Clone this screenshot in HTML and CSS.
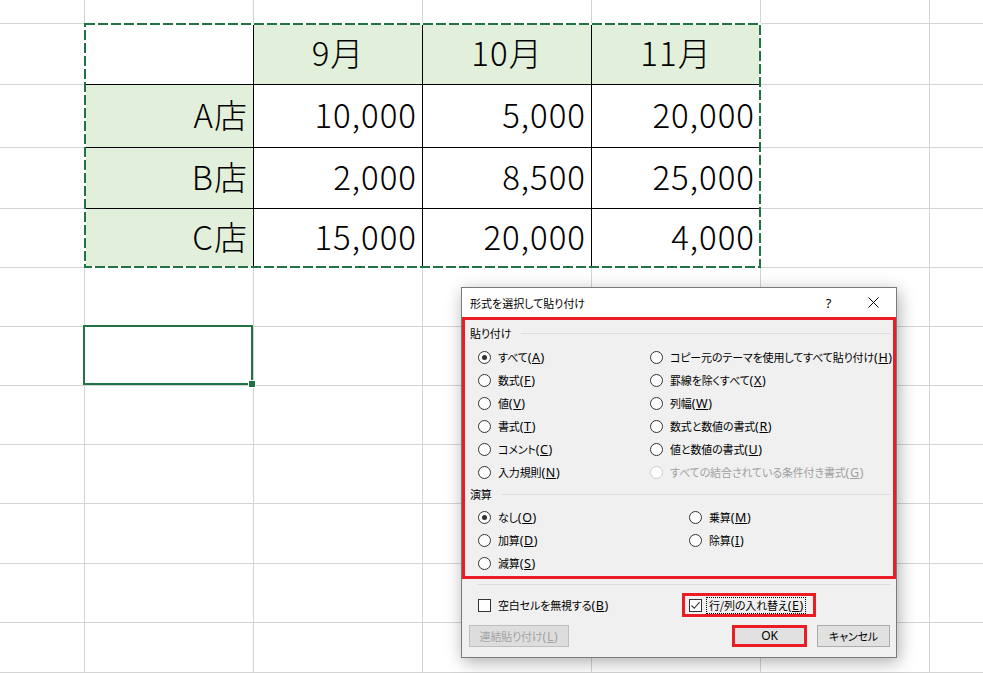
FILE: index.html
```html
<!DOCTYPE html>
<html lang="ja">
<head>
<meta charset="utf-8">
<title>形式を選択して貼り付け</title>
<link rel="stylesheet" href="styles.css">
</head>
<body>
<div class="sheet">
  <div></div><div></div><div></div><div></div><div></div><div></div><div></div>

  <div></div><div class="t"></div><div class="t h">9月</div><div class="t h">10月</div><div class="t h">11月</div><div></div><div></div>
  <div></div><div class="t lab">A店</div><div class="t num">10,000</div><div class="t num">5,000</div><div class="t num">20,000</div><div></div><div></div>
  <div></div><div class="t lab">B店</div><div class="t num">2,000</div><div class="t num">8,500</div><div class="t num">25,000</div><div></div><div></div>
  <div></div><div class="t lab">C店</div><div class="t num">15,000</div><div class="t num">20,000</div><div class="t num">4,000</div><div></div><div></div>

  <div></div><div></div><div></div><div></div><div></div><div></div><div></div>
  <div></div><div class="sel"></div><div></div><div></div><div></div><div></div><div></div>
  <div></div><div></div><div></div><div></div><div></div><div></div><div></div>
  <div></div><div></div><div></div><div></div><div></div><div></div><div></div>
  <div></div><div></div><div></div><div></div><div></div><div></div><div></div>
  <div></div><div></div><div></div><div></div><div></div><div></div><div></div>
  <div></div><div></div><div></div><div></div><div></div><div></div><div></div>
</div>

<!-- copy marquee around the copied range -->
<svg class="ants" width="678" height="246" viewBox="0 0 678 246">
  <rect x="1" y="1" width="675" height="243" fill="none" stroke="#fff" stroke-width="2"/>
  <rect x="1" y="1" width="675" height="243" fill="none" stroke="#217346" stroke-width="2" stroke-dasharray="10 3"/>
</svg>

<div class="dialog">
  <div class="titlebar">
    <span class="title">形式を選択して貼り付け</span>
    <span class="tbtn help">?</span>
    <span class="tbtn close">
      <svg width="11" height="11" viewBox="0 0 11 11"><path d="M0.5 0.5L10.5 10.5M10.5 0.5L0.5 10.5" stroke="#000" stroke-width="1" fill="none"/></svg>
    </span>
  </div>

  <div class="options">
    <div class="glabel"><span>貼り付け</span></div>
    <div class="choices paste">
      <label class="opt"><span class="radio on"></span><span>すべて<span class="key">(<u>A</u>)</span></span></label>
      <label class="opt"><span class="radio"></span><span>コピー元のテーマを使用してすべて貼り付け<span class="key">(<u>H</u>)</span></span></label>
      <label class="opt"><span class="radio"></span><span>数式<span class="key">(<u>F</u>)</span></span></label>
      <label class="opt"><span class="radio"></span><span>罫線を除くすべて<span class="key">(<u>X</u>)</span></span></label>
      <label class="opt"><span class="radio"></span><span>値<span class="key">(<u>V</u>)</span></span></label>
      <label class="opt"><span class="radio"></span><span>列幅<span class="key">(<u>W</u>)</span></span></label>
      <label class="opt"><span class="radio"></span><span>書式<span class="key">(<u>T</u>)</span></span></label>
      <label class="opt"><span class="radio"></span><span>数式と数値の書式<span class="key">(<u>R</u>)</span></span></label>
      <label class="opt"><span class="radio"></span><span>コメント<span class="key">(<u>C</u>)</span></span></label>
      <label class="opt"><span class="radio"></span><span>値と数値の書式<span class="key">(<u>U</u>)</span></span></label>
      <label class="opt"><span class="radio"></span><span>入力規則<span class="key">(<u>N</u>)</span></span></label>
      <label class="opt off"><span class="radio"></span><span>すべての結合されている条件付き書式<span class="key">(<u>G</u>)</span></span></label>
    </div>
    <div class="glabel ops-label"><span>演算</span></div>
    <div class="choices ops">
      <label class="opt"><span class="radio on"></span><span>なし<span class="key">(<u>O</u>)</span></span></label>
      <label class="opt"><span class="radio"></span><span>乗算<span class="key">(<u>M</u>)</span></span></label>
      <label class="opt"><span class="radio"></span><span>加算<span class="key">(<u>D</u>)</span></span></label>
      <label class="opt"><span class="radio"></span><span>除算<span class="key">(<u>I</u>)</span></span></label>
      <label class="opt"><span class="radio"></span><span>減算<span class="key">(<u>S</u>)</span></span></label>
    </div>
  </div>

  <div class="sep"></div>

  <div class="checks">
    <label class="chk"><span class="box"></span><span class="txt">空白セルを無視する<span class="key">(<u>B</u>)</span></span></label>
    <label class="chk marked"><span class="box on">
      <svg width="11" height="11" viewBox="0 0 11 11"><path d="M1.5 5.5L4.2 8.3L9.6 2.2" stroke="#333" stroke-width="1.1" fill="none"/></svg>
    </span><span class="txt focus">行/列の入れ替え<span class="key">(<u>E</u>)</span></span></label>
  </div>

  <div class="buttons">
    <span class="btn link"><span>連結貼り付け<span class="key">(<u>L</u>)</span></span></span>
    <span class="grow"></span>
    <span class="btn ok">OK</span>
    <span class="btn cancel">キャンセル</span>
  </div>
</div>
</body>
</html>
```

FILE: styles.css
```css
* {
  box-sizing: border-box;
}

html,
body {
  margin: 0;
}

body {
  width: 983px;
  height: 673px;
  overflow: hidden;
  position: relative;
  background: #fff;
  font-family: "Noto Sans CJK JP", "Noto Sans", sans-serif;
  color: #000;
}

/* worksheet grid */
.sheet {
  display: grid;
  grid-template-columns: 85px repeat(5, 169px) 1fr;
  grid-template-rows: 24px 61px 63px 61px 59px 59px 59px 59px 59px 60px 59px 1fr;
  height: 673px;
}

.sheet > div {
  border-right: 1px solid #d4d4d4;
  border-bottom: 1px solid #d4d4d4;
}

.sheet > div:nth-child(7n) {
  border-right: 0;
}

.t {
  display: flex;
  align-items: center;
  padding: 0 5px 3px;
  font-size: 33px;
  font-weight: 300;
  letter-spacing: 1px;
  line-height: 1;
  border-color: #000 !important;
  white-space: nowrap;
}

.h {
  justify-content: center;
  background: #e2efda;
}

.lab {
  justify-content: flex-end;
  background: #e2efda;
}

.num {
  justify-content: flex-end;
}

.sel {
  position: relative;
}

.sel::after {
  content: "";
  position: absolute;
  left: -2px;
  top: -2px;
  right: 0;
  bottom: 0;
  border: 2px solid #217346;
}

.sel::before {
  content: "";
  position: absolute;
  right: -3px;
  bottom: -3px;
  width: 6px;
  height: 6px;
  background: #217346;
  border: 1px solid #fff;
  z-index: 2;
}

.ants {
  position: absolute;
  left: 84px;
  top: 23px;
}

/* paste special dialog */
.dialog {
  position: absolute;
  left: 461px;
  top: 287px;
  width: 436px;
  height: 371px;
  background: #f0f0f0;
  border: 1px solid #7a7a7a;
  box-shadow: 2px 4px 16px rgba(0, 0, 0, 0.32);
  font-size: 11px;
  line-height: 16px;
  letter-spacing: -0.15px;
  font-feature-settings: "palt";
}

/* access-key hints use the wider latin face */
.key {
  font-family: "Noto Sans", sans-serif;
  font-size: 12.5px;
  letter-spacing: 0.6px;
}

.titlebar {
  height: 29px;
  background: #fff;
  display: flex;
  align-items: center;
  padding-left: 8px;
  letter-spacing: 0;
}

.title {
  flex: 1;
}

.tbtn {
  width: 45px;
  display: flex;
  justify-content: center;
  align-items: center;
}

.help {
  font-family: "Noto Sans", sans-serif;
  font-size: 13px;
}

.options {
  height: 262px;
  border: 3px solid #ea1c24;
  padding: 5px 3px 0 0;
}

.glabel {
  display: flex;
  align-items: center;
  gap: 10px;
  height: 16px;
  padding-left: 5px;
}

.glabel::after {
  content: "";
  flex: 1;
  height: 1px;
  background: #dcdcdc;
}

.ops-label {
  margin-top: 2px;
}

.choices {
  display: grid;
  grid-auto-rows: 23px;
  padding-left: 13px;
  margin-top: 5px;
}

.paste {
  grid-template-columns: 172px 1fr;
}

.ops {
  grid-template-columns: 211px 1fr;
  margin-top: 4px;
}

.opt {
  display: flex;
  align-items: center;
  gap: 7px;
  white-space: nowrap;
}

.radio {
  flex: none;
  width: 13px;
  height: 13px;
  border: 1px solid #333;
  border-radius: 50%;
  background: #fff;
  display: grid;
  place-items: center;
}

.radio.on::after {
  content: "";
  width: 5px;
  height: 5px;
  border-radius: 50%;
  background: #333;
}

.opt.off {
  color: #a0a0a0;
}

.opt.off .radio {
  border-color: #cccccc;
}

.sep {
  height: 1px;
  background: #dcdcdc;
  margin: 5px 5px 0 15px;
}

.checks {
  display: grid;
  grid-template-columns: 204px auto;
  justify-items: start;
  align-items: center;
  height: 24px;
  margin: 8px 0 0 16px;
}

.chk {
  display: flex;
  align-items: center;
  white-space: nowrap;
}

.box {
  flex: none;
  width: 13px;
  height: 13px;
  border: 1px solid #333;
  background: #fff;
  margin-right: 7px;
  display: grid;
  place-items: center;
}

.marked {
  height: 24px;
  width: 134px;
  border: 3px solid #ea1c24;
  padding-left: 4px;
}

.marked .box {
  margin-right: 4px;
}

.txt.focus {
  border: 1px dotted #000;
  padding: 0 1px 0 2px;
  line-height: 15px;
}

.buttons {
  display: flex;
  height: 22px;
  margin: 8px 6px 0 7px;
}

.grow {
  flex: 1;
}

.btn {
  display: flex;
  align-items: center;
  justify-content: center;
  height: 22px;
  background: #e1e1e1;
  border: 1px solid #adadad;
  white-space: nowrap;
}

.btn.link {
  width: 100px;
  background: #dddddd;
  border-color: #bfbfbf;
  color: #a3a3a3;
}

.btn.ok {
  width: 75px;
  border: 3px solid #ea1c24;
  font-family: "Noto Sans", sans-serif;
  font-size: 12px;
}

.btn.cancel {
  width: 73px;
  margin-left: 10px;
}
```
